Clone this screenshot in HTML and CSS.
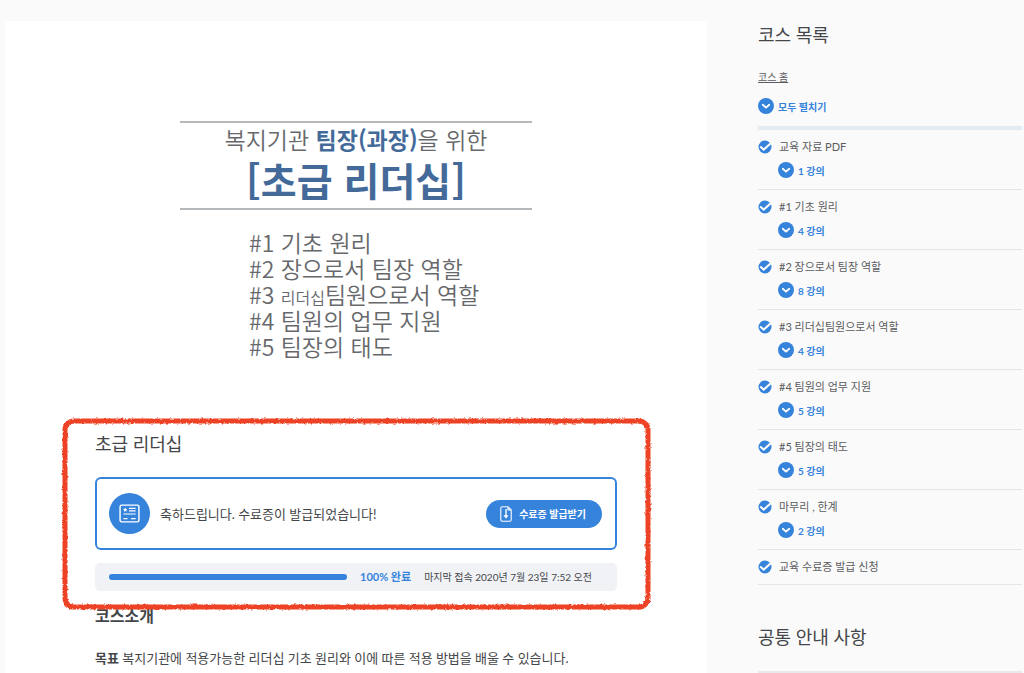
FILE: index.html
```
<!DOCTYPE html>
<html lang="ko">
<head>
  <meta charset="UTF-8">
  <meta name="viewport" content="width=device-width, initial-scale=1.0">
  <title>초급 리더십</title>
  <link rel="stylesheet" href="styles.css">
</head>
<body>
  <!-- shared icons -->
  <svg class="sprite" aria-hidden="true">
    <symbol id="chevron" viewBox="0 0 16 16">
      <circle cx="8" cy="8" r="8" fill="#3683dc"/>
      <path d="M4.8 6.8 L8 9.6 L11.2 6.8" fill="none" stroke="#fff" stroke-width="1.8" stroke-linecap="round" stroke-linejoin="round"/>
    </symbol>
    <symbol id="check" viewBox="0 0 14 14">
      <circle cx="7" cy="7" r="6.5" fill="#3683dc"/>
      <path d="M2.2 6.6 L5.7 9.6 L12.8 3.2" fill="none" stroke="#fafafa" stroke-width="2"/>
    </symbol>
  </svg>

  <div class="page">
    <main class="course">
      <div class="slide">
        <div class="slide-title">
          <p>복지기관 <b>팀장(과장)</b>을 위한</p>
          <h1>[초급 리더십]</h1>
        </div>
        <ul class="slide-list">
          <li>#1 기초 원리</li>
          <li>#2 장으로서 팀장 역할</li>
          <li>#3 <small>리더십</small>팀원으로서 역할</li>
          <li>#4 팀원의 업무 지원</li>
          <li>#5 팀장의 태도</li>
        </ul>
      </div>

      <section class="status">
        <h2>초급 리더십</h2>

        <div class="certificate">
          <svg class="cert-icon" viewBox="0 0 40 40" aria-hidden="true">
            <circle cx="20" cy="20" r="20" fill="#3683dc"/>
            <rect x="10.8" y="11.8" width="18.4" height="16.4" rx="1.5" fill="none" stroke="#fff" stroke-width="1.4"/>
            <path d="M15.8 14.2 l.7 1.3 1.5.2 -1.1 1 .3 1.5 -1.4-.7 -1.4.7 .3-1.5 -1.1-1 1.5-.2z" fill="#fff"/>
            <path d="M19.5 15 H26 M19.5 17.5 H26 M14 20.5 H26 M14 25 H18 M21.5 25 H26" stroke="#fff" stroke-width="1.1"/>
          </svg>
          <p>축하드립니다. 수료증이 발급되었습니다!</p>
          <button type="button" class="download">
            <svg viewBox="0 0 12 16" aria-hidden="true">
              <path d="M8 .8 H2.3 Q.8 .8 .8 2.3 V13.7 Q.8 15.2 2.3 15.2 H9.7 Q11.2 15.2 11.2 13.7 V4 L8 .8 V4 H11.2" fill="none" stroke="#fff" stroke-width="1.1" stroke-linejoin="round"/>
              <path d="M6 3 V10" stroke="#fff" stroke-width="1.4"/>
              <path d="M3.4 9.3 H8.6 L6 12.8z" fill="#fff"/>
            </svg>
            수료증 발급받기
          </button>
        </div>

        <div class="progress">
          <div class="track" role="progressbar" aria-label="진행률" aria-valuenow="100" aria-valuemin="0" aria-valuemax="100">
            <div class="fill" style="width: 100%"></div>
          </div>
          <strong>100% 완료</strong>
          <span>마지막 접속 2020년 7월 23일 7:52 오전</span>
        </div>

        <!-- crayon outline -->
        <svg class="marker" aria-hidden="true">
          <filter id="crayon" x="-5%" y="-5%" width="110%" height="110%">
            <feTurbulence type="fractalNoise" baseFrequency="0.4" numOctaves="2" seed="4"/>
            <feDisplacementMap in="SourceGraphic" scale="3" xChannelSelector="R" yChannelSelector="G"/>
          </filter>
          <rect class="marker-line" rx="9" filter="url(#crayon)"/>
        </svg>
      </section>

      <section class="intro">
        <h3>코스소개</h3>
        <p><b>목표</b> 복지기관에 적용가능한 리더십 기초 원리와 이에 따른 적용 방법을 배울 수 있습니다.</p>
      </section>
    </main>

    <aside class="sidebar">
      <h2>코스 목록</h2>
      <a class="home" href="#">코스 홈</a>
      <button type="button" class="expand expand-all"><svg><use href="#chevron"/></svg>모두 펼치기</button>

      <ul class="lessons">
        <li>
          <a href="#"><svg><use href="#check"/></svg>교육 자료 PDF</a>
          <button type="button" class="expand"><svg><use href="#chevron"/></svg>1 강의</button>
        </li>
        <li>
          <a href="#"><svg><use href="#check"/></svg>#1 기초 원리</a>
          <button type="button" class="expand"><svg><use href="#chevron"/></svg>4 강의</button>
        </li>
        <li>
          <a href="#"><svg><use href="#check"/></svg>#2 장으로서 팀장 역할</a>
          <button type="button" class="expand"><svg><use href="#chevron"/></svg>8 강의</button>
        </li>
        <li>
          <a href="#"><svg><use href="#check"/></svg>#3 리더십팀원으로서 역할</a>
          <button type="button" class="expand"><svg><use href="#chevron"/></svg>4 강의</button>
        </li>
        <li>
          <a href="#"><svg><use href="#check"/></svg>#4 팀원의 업무 지원</a>
          <button type="button" class="expand"><svg><use href="#chevron"/></svg>5 강의</button>
        </li>
        <li>
          <a href="#"><svg><use href="#check"/></svg>#5 팀장의 태도</a>
          <button type="button" class="expand"><svg><use href="#chevron"/></svg>5 강의</button>
        </li>
        <li>
          <a href="#"><svg><use href="#check"/></svg>마무리 , 한계</a>
          <button type="button" class="expand"><svg><use href="#chevron"/></svg>2 강의</button>
        </li>
        <li>
          <a href="#"><svg><use href="#check"/></svg>교육 수료증 발급 신청</a>
        </li>
      </ul>

      <h2 class="notice">공통 안내 사항</h2>
    </aside>
  </div>
</body>
</html>
```

FILE: styles.css
```
* {
  box-sizing: border-box;
}

body {
  margin: 0;
  background-color: #fafafa;
  color: #444649;
  font-family: Lato, "Noto Sans CJK KR", sans-serif;
  font-size: 13px;
  line-height: 20px;
}

h1, h2, h3, p, ul {
  margin: 0;
  padding: 0;
}

ul {
  list-style: none;
}

button {
  border: none;
  font-family: inherit;
  cursor: pointer;
}

h2 {
  font-size: 18px;
  font-weight: 400;
  line-height: 28px;
}

.sprite {
  display: none;
}

.page {
  display: grid;
  grid-template-columns: minmax(0, 1fr) 264px;
  gap: 51px;
  padding: 21px 2px 0 5px;
  height: 100vh;
  overflow: hidden;
}

.course {
  background-color: #fff;
  padding: 100px 90px 0;
}

/* Title slide */
.slide {
  max-width: 352px;
  margin: 0 auto;
  font-family: "Noto Sans CJK KR", sans-serif;
  font-weight: 350;
  color: #66686b;
}

.slide-title {
  border-top: 2px solid #b4b8ba;
  border-bottom: 2px solid #b4b8ba;
  padding-bottom: 4px;
  text-align: center;
  font-size: 23px;
  line-height: 32px;
}

.slide-title b,
.slide-title h1 {
  color: #446a9a;
  font-weight: 700;
}

.slide-title h1 {
  font-size: 39px;
  line-height: 49px;
}

.slide-list {
  padding: 19px 0 0 69px;
  font-size: 23px;
  line-height: 26px;
  white-space: nowrap;
}

.slide-list small {
  font-size: 16px;
  line-height: 16px;
}

/* Completion status */
.status {
  position: relative;
  margin-top: 71px;
}

.certificate {
  display: flex;
  align-items: center;
  gap: 10px;
  height: 73px;
  margin-top: 19px;
  padding: 0 13px 0 12px;
  border: 2px solid #3683dc;
  border-radius: 6px;
}

.cert-icon {
  width: 41px;
  height: 41px;
}

.download {
  display: flex;
  align-items: center;
  gap: 7px;
  height: 28px;
  margin-left: auto;
  padding: 0 16px 0 14px;
  border-radius: 14px;
  background-color: #3683dc;
  color: #fff;
  font-size: 10px;
  font-weight: 700;
}

.download svg {
  width: 12px;
  height: 16px;
}

.progress {
  display: flex;
  align-items: center;
  gap: 13px;
  height: 28px;
  margin-top: 13px;
  padding: 0 25px 0 14px;
  border-radius: 5px;
  background-color: #f0f2f6;
  font-size: 10px;
}

.progress strong {
  color: #3683dc;
  font-size: 11px;
}

.track {
  flex: 1;
  height: 6px;
  border-radius: 3px;
  background-color: #dde1e8;
}

.fill {
  height: 100%;
  border-radius: 3px;
  background-color: #3683dc;
}

.marker {
  position: absolute;
  top: -14px;
  left: -36px;
  width: calc(100% + 72px);
  height: calc(100% + 35px);
  pointer-events: none;
}

.marker-line {
  x: 6px;
  y: 5px;
  width: calc(100% - 11px);
  height: calc(100% - 10px);
  fill: none;
  stroke: #ed4327;
  stroke-width: 5px;
}

.intro {
  margin-top: 13px;
}

.intro h3 {
  font-size: 16px;
  line-height: 24px;
}

.intro p {
  margin-top: 20px;
}

/* Sidebar */
.sidebar {
  color: #5a5c5f;
}

.sidebar h2 {
  color: #444649;
}

.home {
  display: block;
  margin-top: 18px;
  color: inherit;
  font-size: 10px;
}

.expand {
  display: flex;
  align-items: center;
  gap: 4px;
  height: 16px;
  margin: 5px 0 0 20px;
  padding: 0;
  background: none;
  color: #3683dc;
  font-size: 10px;
  font-weight: 700;
}

.expand svg {
  width: 16px;
  height: 16px;
}

.expand-all {
  margin: 11px 0 0;
}

.lessons {
  margin-top: 12px;
  border-top: 4px solid #e2eaf2;
}

.lessons li {
  padding: 7px 0 11px;
  border-bottom: 1px solid #e4e5e6;
  font-size: 11px;
}

.lessons li:last-child {
  padding-bottom: 7px;
}

.lessons a {
  display: flex;
  align-items: center;
  gap: 7px;
  color: inherit;
  text-decoration: none;
}

.lessons a svg {
  width: 14px;
  height: 14px;
}

.notice {
  margin-top: 38px;
  padding-bottom: 20px;
  border-bottom: 3px solid #e8e9eb;
}
```
